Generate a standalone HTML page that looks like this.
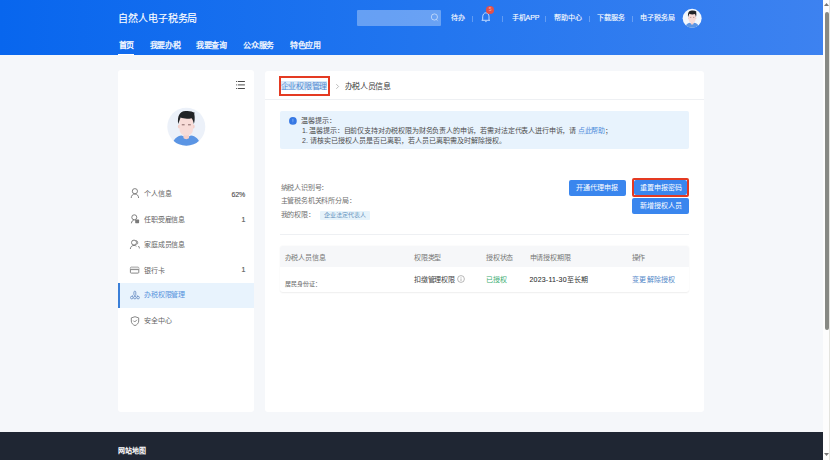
<!DOCTYPE html>
<html lang="zh-CN"><head><meta charset="utf-8">
<style>
*{margin:0;padding:0;box-sizing:border-box}
html,body{width:830px;height:460px;overflow:hidden;background:#f5f7fa;font-family:"Liberation Sans",sans-serif}
.a{position:absolute;white-space:nowrap}
.t{position:absolute;white-space:nowrap;line-height:12px;height:12px}
#hdr{left:0;top:0;width:822.5px;height:54.5px;background:linear-gradient(90deg,#0866ee 0%,#2175ef 50%,#3d82f0 100%)}
.w{color:#fff;-webkit-text-stroke:0.25px #fff}
.sep{position:absolute;width:1px;height:6px;top:15.5px;background:rgba(255,255,255,.27)}
.card{position:absolute;background:#fff;border-radius:3px}
.g{color:#666}
.btn{position:absolute;background:#3a86ee;color:#fff;border-radius:2px;text-align:center;font-size:7px;font-weight:500}
.ic{position:absolute}
.ic *{vector-effect:non-scaling-stroke}
</style></head><body>
<svg width="0" height="0" style="position:absolute">
<defs>
<clipPath id="avc"><circle cx="22.3" cy="24.7" r="19"/></clipPath>
<g id="face">
<path d="M8 46 C8 38 13 34 17.5 33.6 L22.3 35.6 L27 33.6 C31.5 34 36.6 38 36.6 46 Z" fill="#5b95e4"/>
<path d="M19.5 30 L25 30 L25 36 C24 37.5 20.5 37.5 19.5 36 Z" fill="#f6cfc8"/>
<ellipse cx="15.2" cy="24.5" rx="1.3" ry="2" fill="#f3cfc9"/>
<ellipse cx="29.4" cy="24.5" rx="1.3" ry="2" fill="#f3cfc9"/>
<path d="M15.5 16 L29 16 L29 27 C29 31.5 26 33.5 22.3 33.5 C18.6 33.5 15.5 31.5 15.5 27 Z" fill="#f8dcd8"/>
<path d="M14.2 22 C13.2 14 15.5 9.5 21.5 9 C25.5 8.6 28.5 9.5 30.8 10.8 C30.2 11.4 30 12 30.4 12.6 C31 16 30.7 19.5 29.9 22 C29.2 19 28.6 17.2 27.6 16.2 C24 17.2 19 16.8 16.6 15.6 C15.9 17.5 15.2 19.8 14.2 22 Z" fill="#222427"/>
<path d="M17.8 22.8 H20.6 M24 22.8 H26.8" stroke="#7a5a5a" stroke-width="0.9"/>
</g>
</defs>
</svg>
<div id="hdr" class="a"></div>
<div class="t w" style="left:118px;top:12.9px;font-size:10px;letter-spacing:-0.08px;-webkit-text-stroke:0.12px #fff">自然人电子税务局</div>
<div class="a" style="left:357px;top:10.2px;width:83.7px;height:15.6px;background:rgba(255,255,255,.32);border-radius:1px"></div>
<svg class="ic" style="left:428px;top:11px" width="12" height="13" viewBox="0 0 12 13"><circle cx="6.4" cy="6" r="3.1" fill="none" stroke="rgba(255,255,255,.5)" stroke-width="1"/><path d="M8.4 8.4 L9.8 10.2" stroke="rgba(255,255,255,.35)" stroke-width="0.9"/></svg>
<div class="t w" style="left:450.5px;top:12.4px;font-size:7px;-webkit-text-stroke:0.1px #fff">待办</div>
<div class="sep" style="left:472px"></div>
<svg class="ic" style="left:480px;top:11px" width="12" height="13" viewBox="0 0 12 13"><path d="M1.6 9.3 H10 M2.7 9.3 V5.8 C2.7 3.4 4.2 1.8 5.9 1.8 C7.6 1.8 9 3.4 9 5.8 V9.3" fill="none" stroke="#cfe2ff" stroke-width="0.9" stroke-linejoin="round"/><path d="M5 10.6 H6.8" stroke="#cfe2ff" stroke-width="0.7"/></svg>
<div class="a" style="left:486.3px;top:6.3px;width:7.5px;height:7.5px;border-radius:50%;background:#e2504a;color:#f7b0a8;font-size:5px;line-height:7.5px;text-align:center">5</div>
<div class="sep" style="left:502px"></div>
<div class="t w" style="left:511.5px;top:12.4px;font-size:7px;-webkit-text-stroke:0.1px #fff">手机APP</div>
<div class="sep" style="left:545px"></div>
<div class="t w" style="left:553.5px;top:12.4px;font-size:7px;-webkit-text-stroke:0.1px #fff">帮助中心</div>
<div class="sep" style="left:589px"></div>
<div class="t w" style="left:597px;top:12.4px;font-size:7px;-webkit-text-stroke:0.1px #fff">下载服务</div>
<div class="sep" style="left:632px"></div>
<div class="t w" style="left:640px;top:12.4px;font-size:7px;-webkit-text-stroke:0.1px #fff">电子税务局</div>
<svg class="a" style="left:680.8px;top:5.5px" width="23" height="23" viewBox="0 0 46 46"><circle cx="22.3" cy="24.7" r="19" fill="#f2f7fd"/><g clip-path="url(#avc)"><use href="#face"/></g></svg>

<div class="t w" style="left:118.5px;top:39.5px;font-size:8px;font-weight:bold;letter-spacing:-0.5px;-webkit-text-stroke:0">首页</div>
<div class="t w" style="left:149.8px;top:39.9px;font-size:8px;letter-spacing:-0.3px">我要办税</div>
<div class="t w" style="left:196px;top:39.9px;font-size:8px;letter-spacing:-0.3px">我要查询</div>
<div class="t w" style="left:243.2px;top:39.9px;font-size:8px;letter-spacing:-0.3px">公众服务</div>
<div class="t w" style="left:290px;top:39.9px;font-size:8px;letter-spacing:-0.3px">特色应用</div>
<div class="a" style="left:118px;top:53.9px;width:16px;height:1.1px;background:#fff"></div>

<!-- left card -->
<div class="card" style="left:118px;top:70px;width:136px;height:342px"></div>
<svg class="ic" style="left:236px;top:80px" width="10" height="10" viewBox="0 0 10 10"><g stroke="#4a4a4a" stroke-width="1"><path d="M0 1.5H0.9M1.8 1.5H8.9M0 4.9H0.9M1.8 4.9H8.9M0 8.5H0.9M1.8 8.5H8.9"/></g></svg>
<svg class="a" style="left:164px;top:102px" width="46" height="46" viewBox="0 0 46 46"><circle cx="22.3" cy="24.7" r="19" fill="#ecf1f9"/><g clip-path="url(#avc)"><use href="#face"/></g></svg>

<div class="a" style="left:118px;top:283px;width:136px;height:25px;background:#e8f3fd"></div>
<div class="a" style="left:118px;top:283px;width:2px;height:25px;background:#3a7fd8"></div>

<svg class="ic" style="left:128px;top:186px" width="14" height="14" viewBox="0 0 14 14"><g fill="none" stroke="#747474" stroke-width="0.9"><circle cx="6.9" cy="5.2" r="2.6"/><path d="M3.2 12 C3.2 9.6 4.8 8 6.9 8 C9 8 10.6 9.6 10.6 12"/></g></svg>
<svg class="ic" style="left:128px;top:211.5px" width="14" height="14" viewBox="0 0 14 14"><g fill="none" stroke="#747474" stroke-width="0.9"><circle cx="6.3" cy="5.3" r="2.5"/><path d="M3.4 11.3 C3.6 9.3 4.8 8 6.3 8"/></g><rect x="7.2" y="7.6" width="3.9" height="3.6" rx="0.6" fill="#7a7a7a"/></svg>
<svg class="ic" style="left:128px;top:236.5px" width="14" height="14" viewBox="0 0 14 14"><g fill="none" stroke="#747474" stroke-width="0.9"><circle cx="6" cy="5.6" r="2.5"/><path d="M2.3 12 C2.5 9.8 4 8.4 6 8.4 C7 8.4 7.8 8.7 8.4 9.2"/><path d="M8.2 3.6 C9.8 3.8 10.4 6.8 8.6 7.6 M10.4 9 C11.2 9.8 11.4 10.6 11.4 11.4"/></g></svg>
<svg class="ic" style="left:128px;top:262.5px" width="14" height="14" viewBox="0 0 14 14"><g fill="none" stroke="#7a7a7a" stroke-width="0.9"><rect x="2.4" y="4.2" width="8.4" height="5.9" rx="0.8"/><rect x="2.4" y="4.6" width="8.4" height="1.8" fill="#e6e6e6" stroke="none"/><path d="M2.4 6.6 H10.8"/></g></svg>
<svg class="ic" style="left:128px;top:288px" width="14" height="14" viewBox="0 0 14 14"><g fill="none" stroke="#6f93c6" stroke-width="0.9"><rect x="5.9" y="3.2" width="1.9" height="4.3" rx="0.9"/><circle cx="3.8" cy="9.6" r="1.3"/><circle cx="6.9" cy="9.6" r="1.3"/><circle cx="10.1" cy="9.6" r="1.3"/><path d="M5 7.5 L3.8 8.3 M8.8 7.5 L10.1 8.3"/></g></svg>
<svg class="ic" style="left:128px;top:313.5px" width="14" height="14" viewBox="0 0 14 14"><g fill="none" stroke="#7a7a7a" stroke-width="0.9" stroke-linejoin="round"><path d="M7 2.7 L10.7 3.9 L10.7 7 C10.7 9.3 9 10.8 7 11.6 C5 10.8 3.3 9.3 3.3 7 L3.3 3.9 Z"/><path d="M5.3 6.6 L6.7 8 L8.9 5.8"/></g></svg>

<div class="t g" style="left:144px;top:188.4px;font-size:7px;letter-spacing:-0.15px">个人信息</div>
<div class="t" style="left:231.5px;top:188.6px;font-size:7px;letter-spacing:-0.1px;color:#555;-webkit-text-stroke:0.15px #555">62%</div>
<div class="t g" style="left:144px;top:213.9px;font-size:7px;letter-spacing:-0.15px">任职受雇信息</div>
<div class="t" style="left:241.5px;top:213.6px;font-size:7px;color:#555;-webkit-text-stroke:0.15px #555">1</div>
<div class="t g" style="left:144px;top:239.1px;font-size:7px;letter-spacing:-0.15px">家庭成员信息</div>
<div class="t g" style="left:144px;top:264.5px;font-size:7px;letter-spacing:-0.15px">银行卡</div>
<div class="t" style="left:241.5px;top:264.2px;font-size:7px;color:#555;-webkit-text-stroke:0.15px #555">1</div>
<div class="t" style="left:144px;top:289.3px;font-size:7px;letter-spacing:-0.15px;color:#5592dc">办税权限管理</div>
<div class="t g" style="left:144px;top:315.3px;font-size:7px;letter-spacing:-0.15px">安全中心</div>

<!-- main card -->
<div class="card" style="left:264.5px;top:71px;width:439.5px;height:341px"></div>
<div class="a" style="left:264.5px;top:99px;width:439.5px;height:1px;background:#eef0f3"></div>
<div class="a" style="left:281px;top:81.2px;width:45.8px;height:9px;background:#d8e8f8"></div>
<div class="t" style="left:280.8px;top:80.7px;font-size:8px;letter-spacing:-0.3px;color:#5189d2">企业权限管理</div>
<div class="a" style="left:278.8px;top:76.2px;width:51.5px;height:19.6px;border:2px solid #e43a22"></div>
<svg class="ic" style="left:334.5px;top:82.5px" width="5" height="7" viewBox="0 0 5 7"><path d="M1.3 1.2 L3.6 3.5 L1.3 5.8" fill="none" stroke="#aaa" stroke-width="0.8"/></svg>
<div class="t" style="left:344.5px;top:80.6px;font-size:8px;letter-spacing:-0.3px;color:#3a3a3a">办税人员信息</div>

<div class="a" style="left:280px;top:111px;width:409px;height:38px;background:#e8f3fd;border-radius:2px"></div>
<svg class="ic" style="left:289px;top:116.6px" width="8" height="8" viewBox="0 0 8 8"><circle cx="3.9" cy="3.9" r="3.85" fill="#3577e3"/><path d="M3.9 1.8V4.8" stroke="#7fb0f6" stroke-width="0.9"/><circle cx="3.9" cy="5.9" r="0.45" fill="#7fb0f6"/></svg>
<div class="t" style="left:301px;top:115px;font-size:7px;color:#4d4d4d">温馨提示：</div>
<div class="t" style="left:302px;top:125.2px;font-size:7px;letter-spacing:-0.16px;color:#4d4d4d">1. 温馨提示：目前仅支持对办税权限为财务负责人的申诉，若需对法定代表人进行申诉，请<span style="color:#4f8ddb;margin-left:1.6px">点此帮助</span>；</div>
<div class="t" style="left:302px;top:134.6px;font-size:7px;color:#4d4d4d">2. 请核实已授权人员是否已离职，若人员已离职需及时解除授权。</div>

<div class="t g" style="left:280.5px;top:181.7px;font-size:7px;letter-spacing:-0.2px;color:#707070">纳税人识别号：</div>
<div class="t g" style="left:280.5px;top:195px;font-size:7px;letter-spacing:-0.2px;color:#707070">主管税务机关科所分局：</div>
<div class="t g" style="left:280.5px;top:208.8px;font-size:7px;letter-spacing:-0.2px;color:#707070">我的权限：</div>
<div class="a" style="left:320px;top:210.5px;width:49.5px;height:9.3px;background:#e6f3fb;border-radius:1px"></div>
<div class="t" style="left:324px;top:209px;font-size:6px;color:#6893bd">企业法定代表人</div>

<div class="btn" style="left:568.5px;top:180px;width:57px;height:16px;line-height:16px">开通代理申报</div>
<div class="btn" style="left:632px;top:198px;width:57px;height:16px;line-height:16px">新增授权人员</div>
<div class="btn" style="left:634px;top:180px;width:53px;height:15px;line-height:15px">重置申报密码</div>
<div class="a" style="left:632px;top:178px;width:57px;height:19px;border:2px solid #e43a22;border-radius:2px"></div>

<div class="a" style="left:280px;top:233.5px;width:409px;height:1px;background:#eef0f3"></div>
<div class="a" style="left:280px;top:246px;width:409px;height:45.8px;border-radius:3px;background:#fff;box-shadow:0 0.5px 1.5px rgba(0,0,0,.07)"></div>
<div class="a" style="left:280px;top:246px;width:409px;height:21px;border-radius:3px 3px 0 0;background:#f6f7f9"></div>
<div class="t" style="left:284.5px;top:251.7px;color:#777;font-size:7px;letter-spacing:-0.2px">办税人员信息</div>
<div class="t" style="left:414px;top:251.7px;color:#777;font-size:7px;letter-spacing:-0.2px">权限类型</div>
<div class="t" style="left:486px;top:251.7px;color:#777;font-size:7px;letter-spacing:-0.2px">授权状态</div>
<div class="t" style="left:529.5px;top:251.7px;color:#777;font-size:7px;letter-spacing:-0.2px">申请授权期限</div>
<div class="t" style="left:631.5px;top:251.7px;color:#777;font-size:7px;letter-spacing:-0.2px">操作</div>

<div class="t g" style="left:284.5px;top:277.8px;font-size:6px">居民身份证：</div>
<div class="t" style="left:414px;top:273.6px;font-size:7px;letter-spacing:-0.2px;color:#444">扣缴管理权限</div>
<svg class="ic" style="left:457.1px;top:275.3px" width="8" height="8" viewBox="0 0 8 8"><circle cx="4" cy="4" r="3.4" fill="none" stroke="#999" stroke-width="0.7"/><path d="M4 3.4V6M4 2V2.7" stroke="#999" stroke-width="0.7"/></svg>
<div class="t" style="left:486px;top:273.6px;font-size:7px;letter-spacing:-0.2px;color:#3aad72">已授权</div>
<div class="t" style="left:529.5px;top:273.6px;font-size:7px;color:#333"><span style="font-size:7px;letter-spacing:0.2px;color:#2e2e2e;-webkit-text-stroke:0.08px #333">2023-11-30</span>至长期</div>
<div class="t" style="left:631.5px;top:273.6px;font-size:7px;color:#5287c8">变更 解除授权</div>

<!-- footer -->
<div class="a" style="left:0;top:432px;width:823px;height:28px;background:#1f2633"></div>
<div class="t w" style="left:118px;top:445.3px;font-size:7px;font-weight:bold;-webkit-text-stroke:0">网站地图</div>

<!-- scrollbar -->
<div class="a" style="left:822.8px;top:0;width:7.2px;height:460px;background:linear-gradient(90deg,#fdfdfd 0,#fdfdfd 80%,#e4e4df 82%,#e4e4df 100%)"></div>
<div class="a" style="left:824.5px;top:11.7px;width:4.2px;height:318.3px;background:#878984;border-radius:2.2px"></div>
<svg class="a" style="left:823.2px;top:2px" width="7" height="5" viewBox="0 0 7 5"><path d="M1 4L3.5 1L6 4Z" fill="#777"/></svg>
<svg class="a" style="left:823px;top:452px" width="7" height="5" viewBox="0 0 7 5"><path d="M1 1L3.5 4L6 1Z" fill="#777"/></svg>
</body></html>
